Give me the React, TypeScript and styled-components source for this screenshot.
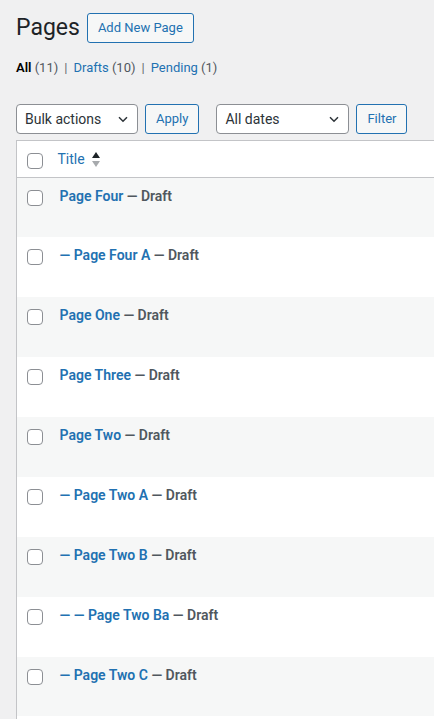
import React from 'react';
import styled, { createGlobalStyle } from 'styled-components';

const GlobalStyle = createGlobalStyle`
    html, body {
        margin: 0;
        padding: 0;
        background: #f0f0f1;
        overflow: hidden;
    }
    body {
        font-family: Roboto, "Noto Sans", "Liberation Sans", sans-serif;
        color: #3c434a;
        font-size: 13px;
    }
`;

const Wrap = styled.div`
    padding: 13px 0 0 16px;
`;

const HeadingRow = styled.div`
    display: flex;
    align-items: center;
    gap: 7px;
    height: 30px;
`;

const Heading = styled.h1`
    margin: 0;
    font-size: 23px;
    font-weight: 400;
    line-height: 30px;
    color: #1d2327;
`;

const Button = styled.button`
    height: 30px;
    box-sizing: border-box;
    padding: 0 10px;
    border: 1px solid #2271b1;
    border-radius: 3px;
    background: #f6f7f7;
    color: #2271b1;
    font-family: inherit;
    font-size: 13px;
    line-height: 28px;
    cursor: pointer;
`;

const SubNav = styled.ul`
    display: flex;
    list-style: none;
    margin: 15px 0 0;
    padding: 0;
    font-size: 13px;
    line-height: 20px;
    color: #646970;
`;

const NavItem = styled.li`
    white-space: pre;
`;

const NavLink = styled.a<{ $current?: boolean }>`
    color: ${(p) => (p.$current ? '#000' : '#2271b1')};
    font-weight: ${(p) => (p.$current ? 600 : 400)};
    text-decoration: none;
`;

const Count = styled.span`
    color: #50575e;
    font-weight: 400;
`;

const Sep = styled.span`
    color: #646970;
    padding: 0 6px;
`;

const Toolbar = styled.div`
    display: flex;
    align-items: center;
    margin-top: 26px;
    height: 30px;
`;

const Actions = styled.div`
    display: flex;
    gap: 7px;
    margin-right: 17px;
`;

const SelectBox = styled.div<{ $width: number }>`
    position: relative;
    width: ${(p) => p.$width}px;
    height: 30px;
    box-sizing: border-box;
    border: 1px solid #8c8f94;
    border-radius: 4px;
    background: #fff;
    color: #2c3338;
    font-size: 14px;
    line-height: 28px;
    padding: 0 24px 0 8px;
    display: flex;
    align-items: center;
    justify-content: space-between;
`;

const Chevron = styled.svg`
    position: absolute;
    right: 9px;
    top: 11px;
`;

const Table = styled.table`
    margin-top: 6px;
    width: calc(100% + 20px);
    border-collapse: collapse;
    border-spacing: 0;
    border-top: 1px solid #c3c4c7;
    border-left: 1px solid #c3c4c7;
    background: #fff;
`;

const HeadCell = styled.th<{ $check?: boolean }>`
    height: 37px;
    padding: 0;
    text-align: left;
    font-weight: 400;
    font-size: 14px;
    border-bottom: 1px solid #c3c4c7;
    vertical-align: middle;
    width: ${(p) => (p.$check ? '41px' : 'auto')};
    box-sizing: border-box;
    padding-left: ${(p) => (p.$check ? '10px' : '0')};
    padding-top: ${(p) => (p.$check ? '3px' : '0')};
`;

const SortLink = styled.a`
    display: inline-flex;
    align-items: center;
    gap: 7px;
    color: #2271b1;
    text-decoration: none;
    margin-top: -2px;
`;

const SortIcon = styled.span`
    display: inline-flex;
    flex-direction: column;
    gap: 3px;
    margin-top: 2px;
`;

const Arrow = styled.span<{ $up?: boolean }>`
    width: 0;
    height: 0;
    border-left: 4px solid transparent;
    border-right: 4px solid transparent;
    ${(p) =>
        p.$up
            ? 'border-bottom: 6px solid #1d2327;'
            : 'border-top: 6px solid #a7aaad;'}
`;

const Row = styled.tr<{ $striped: boolean }>`
    background: ${(p) => (p.$striped ? '#f6f7f7' : '#fff')};
`;

const CheckCell = styled.td`
    width: 41px;
    height: 59.875px;
    box-sizing: border-box;
    padding: 12px 0 0 10px;
    vertical-align: top;
`;

const TitleCell = styled.td`
    padding: 9px 10px 0 2px;
    vertical-align: top;
    font-size: 14px;
    line-height: 19.6px;
`;

const Checkbox = styled.input.attrs({ type: 'checkbox' })`
    appearance: none;
    display: block;
    margin: 0;
    width: 16px;
    height: 16px;
    border: 1px solid #8c8f94;
    border-radius: 4px;
    background: #fff;
`;

const RowTitle = styled.strong`
    color: #50575e;
    font-weight: 600;
`;

const TitleLink = styled.a`
    color: #2271b1;
    text-decoration: none;
`;

const pages = [
    { title: 'Page Four', state: 'Draft' },
    { title: '— Page Four A', state: 'Draft' },
    { title: 'Page One', state: 'Draft' },
    { title: 'Page Three', state: 'Draft' },
    { title: 'Page Two', state: 'Draft' },
    { title: '— Page Two A', state: 'Draft' },
    { title: '— Page Two B', state: 'Draft' },
    { title: '— — Page Two Ba', state: 'Draft' },
    { title: '— Page Two C', state: 'Draft' },
];

function Select({ label, width }: { label: string; width: number }) {
    return (
        <SelectBox $width={width}>
            <span>{label}</span>
            <Chevron width="10" height="7" viewBox="0 0 10 7">
                <path d="M1 1.2 L5 5.2 L9 1.2" fill="none" stroke="#2c3338" strokeWidth="1.5" />
            </Chevron>
        </SelectBox>
    );
}

export default function App() {
    return (
        <>
            <GlobalStyle />
            <Wrap>
                <HeadingRow>
                    <Heading>Pages</Heading>
                    <Button>Add New Page</Button>
                </HeadingRow>
                <SubNav>
                    <NavItem>
                        <NavLink $current>
                            All <Count>(11)</Count>
                        </NavLink>
                        <Sep>|</Sep>
                    </NavItem>
                    <NavItem>
                        <NavLink>
                            Drafts <Count>(10)</Count>
                        </NavLink>
                        <Sep>|</Sep>
                    </NavItem>
                    <NavItem>
                        <NavLink>
                            Pending <Count>(1)</Count>
                        </NavLink>
                    </NavItem>
                </SubNav>
                <Toolbar>
                    <Actions>
                        <Select label="Bulk actions" width={122} />
                        <Button>Apply</Button>
                    </Actions>
                    <Actions>
                        <Select label="All dates" width={133} />
                        <Button>Filter</Button>
                    </Actions>
                </Toolbar>
                <Table>
                    <thead>
                        <tr>
                            <HeadCell $check>
                                <Checkbox />
                            </HeadCell>
                            <HeadCell>
                                <SortLink>
                                    Title
                                    <SortIcon>
                                        <Arrow $up />
                                        <Arrow />
                                    </SortIcon>
                                </SortLink>
                            </HeadCell>
                        </tr>
                    </thead>
                    <tbody>
                        {pages.map((page, i) => (
                            <Row key={page.title} $striped={i % 2 === 0}>
                                <CheckCell>
                                    <Checkbox />
                                </CheckCell>
                                <TitleCell>
                                    <RowTitle>
                                        <TitleLink>{page.title}</TitleLink> — {page.state}
                                    </RowTitle>
                                </TitleCell>
                            </Row>
                        ))}
                        {/* next row starts just below the fold */}
                        <Row $striped={false}>
                            <CheckCell />
                            <TitleCell />
                        </Row>
                    </tbody>
                </Table>
            </Wrap>
        </>
    );
}
